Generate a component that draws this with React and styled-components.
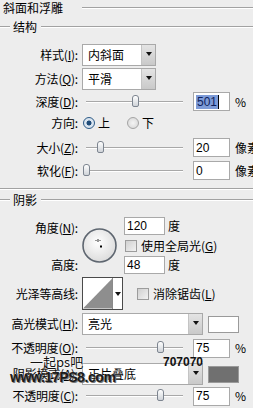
import styled, { createGlobalStyle } from "styled-components";

const GlobalStyle = createGlobalStyle`
  html, body {
    margin: 0;
    padding: 0;
    background: #ededed;
  }
  body {
    width: 253px;
    height: 408px;
    overflow: hidden;
    font-family: "Noto Sans CJK SC", "Noto Sans", sans-serif;
    font-size: 12px;
    color: #000;
  }
`;

const Panel = styled.div`
  position: relative;
  width: 253px;
  height: 408px;
  display: flex;
  flex-direction: column;
  overflow: hidden;
`;

const TitleRow = styled.div`
  height: 16px;
  display: flex;
  align-items: center;
  padding-left: 3px;
  line-height: 1;
  white-space: nowrap;
`;

const Rule = styled.div`
  flex: 1;
  height: 0;
  margin-left: ${(p) => p.$ml || 0}px;
  border-top: 1px solid #a2a2a2;
  border-bottom: 1px solid #ffffff;
`;

const GroupHead = styled.div`
  height: ${(p) => p.$h}px;
  display: flex;
  align-items: center;
  line-height: 1;
  white-space: nowrap;

  &::before {
    content: "";
    width: 10px;
    border-top: 1px solid #a2a2a2;
    border-bottom: 1px solid #ffffff;
  }

  span {
    margin: 0 4px 0 3px;
  }
`;

const Divider = styled.div`
  margin-top: 8px;
  border-top: 1px solid #a2a2a2;
  border-bottom: 1px solid #ffffff;
`;

const Row = styled.div`
  display: flex;
  align-items: center;
  height: ${(p) => p.$h}px;
  margin-top: ${(p) => p.$mt || 0}px;
  line-height: 1;
  white-space: nowrap;
`;

const Label = styled.div`
  width: 78px;
  flex-shrink: 0;
  margin-right: 4px;
  text-align: right;
  white-space: nowrap;
  letter-spacing: -0.2px;

  u {
    text-decoration: underline;
    text-underline-offset: 1px;
  }
`;

const Select = styled.div`
  width: ${(p) => p.$w}px;
  height: 22px;
  box-sizing: border-box;
  display: flex;
  border: 1px solid #a9a9a9;
  background: #ffffff;
  flex-shrink: 0;
`;

const SelectText = styled.div`
  flex: 1;
  display: flex;
  align-items: center;
  padding-left: 5px;
  font-size: 12px;
`;

const SelectButton = styled.div`
  width: 14px;
  display: flex;
  align-items: center;
  justify-content: center;
  border-left: 1px solid #c4c4c4;
  background: linear-gradient(#e4e4e4, #c9c9c9);
  padding-bottom: 3px;
  box-sizing: border-box;
`;

const Arrow = styled.div`
  width: 0;
  height: 0;
  border-left: 3.5px solid transparent;
  border-right: 3.5px solid transparent;
  border-top: 4px solid #111;
`;

const Slider = styled.div`
  position: relative;
  width: 97px;
  height: 0;
  margin-left: 4px;
  flex-shrink: 0;
  border-top: 1px solid #a8a8a8;
  border-bottom: 1px solid #ffffff;
`;

const Thumb = styled.div`
  position: absolute;
  top: -7px;
  width: 7px;
  height: 12px;
  box-sizing: border-box;
  border: 1px solid #7d8590;
  border-radius: 3px 3px 2px 2px;
  background: linear-gradient(#ffffff, #cfd3d8);
`;

const NumBox = styled.div`
  width: ${(p) => p.$w || 37}px;
  height: ${(p) => p.$h || 19}px;
  box-sizing: border-box;
  margin-left: ${(p) => p.$ml || 0}px;
  flex-shrink: 0;
  display: flex;
  align-items: center;
  padding-left: 2px;
  border: 1px solid #a9a9a9;
  background: #ffffff;
  font-family: "Liberation Sans", Arial, sans-serif;
  font-size: 12px;
`;

const Selected = styled.span`
  background: #7d9bd8;
  color: #0d1f5c;
  padding: 1px 1px;
  border-right: 1px solid #000;
`;

const Unit = styled.span`
  margin-left: ${(p) => p.$ml || 5}px;
  font-size: 12px;
`;

const Radio = styled.span`
  width: 12px;
  height: 12px;
  box-sizing: border-box;
  border-radius: 50%;
  margin: 0 3px 0 ${(p) => p.$ml}px;
  border: 1px solid ${(p) => (p.$on ? "#2c5a86" : "#a4a4a4")};
  background: ${(p) =>
    p.$on
      ? "radial-gradient(circle, #1e4b78 0 2.2px, #d9e4ef 2.8px)"
      : "radial-gradient(circle, #f4f4f4, #d4d4d4)"};
  flex-shrink: 0;
`;

const Check = styled.span`
  width: 12px;
  height: 12px;
  box-sizing: border-box;
  border: 1px solid #9c9c9c;
  background: linear-gradient(135deg, #d0d0d0, #f2f2f2);
  margin: 0 4px 0 ${(p) => p.$ml || 0}px;
  flex-shrink: 0;
`;

const AngleBlock = styled.div`
  margin-top: 7px;
  display: grid;
  grid-template-columns: 82px 42px 1fr;
  grid-template-rows: 18px 21px 18px;
  align-items: center;
  line-height: 1;
  white-space: nowrap;
`;

const GridLabel = styled(Label)`
  grid-column: 1;
  grid-row: ${(p) => p.$row};
  padding-top: ${(p) => p.$pt || 0}px;
`;

const Dial = styled.svg`
  grid-column: 2;
  grid-row: 1 / 4;
  align-self: start;
  margin-top: 11px;
`;

const Cell = styled.div`
  grid-column: 3;
  grid-row: ${(p) => p.$row};
  display: flex;
  align-items: center;
`;

const Contour = styled.div`
  width: 41px;
  height: 33px;
  box-sizing: border-box;
  border: 1px solid #4a4a4a;
  background: #ffffff;
  display: flex;
  flex-shrink: 0;
`;

const ContourArrow = styled.div`
  width: 10px;
  display: flex;
  justify-content: center;
  padding-top: 14px;
  box-sizing: border-box;
  border-left: 1px solid #8a8a8a;
`;

const Swatch = styled.div`
  width: 31px;
  height: 17px;
  box-sizing: border-box;
  margin-left: 5px;
  border: 1px solid #9a9a9a;
  background: ${(p) => p.$color};
  flex-shrink: 0;
`;

const Mark = styled.div`
  position: absolute;
  left: ${(p) => p.$x}px;
  top: ${(p) => p.$y}px;
  white-space: nowrap;
  line-height: 1;
  pointer-events: none;
`;

const MarkSmall = styled(Mark)`
  font-size: 13px;
  color: #111;
  text-shadow: 0 0 2px #fff, 0 0 2px #fff;
`;

const MarkBig = styled(Mark)`
  font-family: "Liberation Sans", Arial, sans-serif;
  font-weight: 900;
  font-size: 14px;
  letter-spacing: -0.4px;
  color: #1b1b1b;
  text-shadow: 1px 1px 0 #777, 0 0 1px #fff;
`;

const MarkHex = styled(Mark)`
  font-family: "Liberation Sans", Arial, sans-serif;
  font-weight: 700;
  font-size: 12px;
  color: #111;
`;

function Dropdown({ w, children }) {
  return (
    <Select $w={w}>
      <SelectText>{children}</SelectText>
      <SelectButton>
        <Arrow />
      </SelectButton>
    </Select>
  );
}

function SliderRow({ label, k, pos, value, unit, mt, h = 19, selected }) {
  return (
    <Row $h={h} $mt={mt}>
      <Label>
        {label}(<u>{k}</u>):
      </Label>
      <Slider>
        <Thumb style={{ left: pos - 3.5 }} />
      </Slider>
      <NumBox $ml={10}>{selected ? <Selected>{value}</Selected> : value}</NumBox>
      <Unit>{unit}</Unit>
    </Row>
  );
}

export default function App() {
  return (
    <Panel>
      <GlobalStyle />
      <TitleRow>
        斜面和浮雕
        <Rule $ml={19} />
      </TitleRow>
      <GroupHead $h={22}>
        <span>结构</span>
        <Rule />
      </GroupHead>

      <Row $h={22} $mt={6}>
        <Label>
          样式(<u>I</u>):
        </Label>
        <Dropdown w={74}>内斜面</Dropdown>
      </Row>
      <Row $h={22} $mt={2}>
        <Label>
          方法(<u>Q</u>):
        </Label>
        <Dropdown w={74}>平滑</Dropdown>
      </Row>
      <SliderRow label="深度" k="D" pos={49} value="501" unit="%" mt={2} selected />
      <Row $h={20} $mt={2}>
        <Label>方向:</Label>
        <Radio $on $ml={1} />
        上
        <Radio $ml={17} />
        下
      </Row>
      <SliderRow label="大小" k="Z" pos={14} value="20" unit="像素" mt={5} />
      <SliderRow label="软化" k="F" pos={0} value="0" unit="像素" mt={4} />

      <Divider />
      <GroupHead $h={20}>
        <span>阴影</span>
        <Rule />
      </GroupHead>

      <AngleBlock>
        <GridLabel $row={1} $pt={4}>
          角度(<u>N</u>):
        </GridLabel>
        <Dial width="36" height="36" viewBox="0 0 36 36">
          <defs>
            <radialGradient id="dialFill" cx="45%" cy="40%" r="60%">
              <stop offset="0%" stopColor="#ffffff" />
              <stop offset="100%" stopColor="#dcdcdc" />
            </radialGradient>
          </defs>
          <circle cx="17.5" cy="17.5" r="16.5" fill="url(#dialFill)" stroke="#5e6670" strokeWidth="1.6" />
          <g fill="#333">
            <rect x="15.5" y="11" width="1" height="1" />
            <rect x="15.5" y="13" width="1" height="1" />
            <rect x="13.5" y="12" width="1" height="1" />
            <rect x="17.5" y="12" width="1" height="1" />
            <rect x="15.5" y="12" width="1" height="1" />
          </g>
          <rect x="18" y="17.5" width="2" height="2" fill="#000" />
        </Dial>
        <Cell $row={1}>
          <NumBox $w={41} $h={18}>120</NumBox>
          <Unit $ml={3}>度</Unit>
        </Cell>
        <Cell $row={2}>
          <Check $ml={1} />
          使用全局光(<u>G</u>)
        </Cell>
        <GridLabel $row={3}>高度:</GridLabel>
        <Cell $row={3}>
          <NumBox $w={41} $h={18}>48</NumBox>
          <Unit $ml={3}>度</Unit>
        </Cell>
      </AngleBlock>

      <Row $h={33} $mt={3}>
        <Label>光泽等高线:</Label>
        <Contour>
          <svg width="30" height="31" viewBox="0 0 30 31">
            <polygon points="0,31 30,0 30,31" fill="#8e8e8e" />
          </svg>
          <ContourArrow>
            <Arrow />
          </ContourArrow>
        </Contour>
        <Check $ml={14} />
        消除锯齿(<u>L</u>)
      </Row>

      <Row $h={22} $mt={3}>
        <Label>
          高光模式(<u>H</u>):
        </Label>
        <Dropdown w={121}>亮光</Dropdown>
        <Swatch $color="#ffffff" />
      </Row>
      <SliderRow label="不透明度" k="O" pos={74} value="75" unit="%" mt={4} h={18} />
      <Row $h={22} $mt={6}>
        <Label>
          阴影模式(<u>A</u>):
        </Label>
        <Dropdown w={121}>正片叠底</Dropdown>
        <Swatch $color="#707070" />
      </Row>
      <SliderRow label="不透明度" k="C" pos={74} value="75" unit="%" mt={1} h={20} />

      <MarkSmall $x={30} $y={355}>一起ps吧</MarkSmall>
      <MarkBig $x={10} $y={370}>www.17PS8.com</MarkBig>
      <MarkHex $x={163} $y={356}>707070</MarkHex>
    </Panel>
  );
}
